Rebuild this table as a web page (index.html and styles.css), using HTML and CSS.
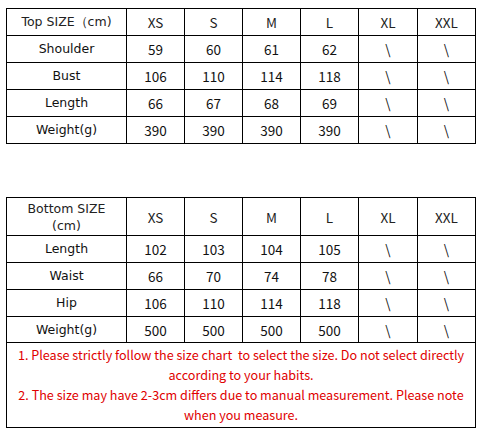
FILE: index.html
```html
<!DOCTYPE html>
<html>
<head>
<meta charset="utf-8">
<link rel="stylesheet" href="styles.css">
</head>
<body>
<div class="chart top">
  <div class="cell label head">Top SIZE（cm)</div>
  <div class="cell head">XS</div><div class="cell head">S</div><div class="cell head">M</div><div class="cell head">L</div><div class="cell head">XL</div><div class="cell head">XXL</div>
  <div class="cell label">Shoulder</div>
  <div class="cell">59</div><div class="cell">60</div><div class="cell">61</div><div class="cell">62</div><div class="cell">\</div><div class="cell">\</div>
  <div class="cell label">Bust</div>
  <div class="cell">106</div><div class="cell">110</div><div class="cell">114</div><div class="cell">118</div><div class="cell">\</div><div class="cell">\</div>
  <div class="cell label">Length</div>
  <div class="cell">66</div><div class="cell">67</div><div class="cell">68</div><div class="cell">69</div><div class="cell">\</div><div class="cell">\</div>
  <div class="cell label">Weight(g)</div>
  <div class="cell">390</div><div class="cell">390</div><div class="cell">390</div><div class="cell">390</div><div class="cell">\</div><div class="cell">\</div>
</div>

<div class="chart bottom">
  <div class="cell label head two">Bottom SIZE<br>(cm)</div>
  <div class="cell head">XS</div><div class="cell head">S</div><div class="cell head">M</div><div class="cell head">L</div><div class="cell head">XL</div><div class="cell head">XXL</div>
  <div class="cell label">Length</div>
  <div class="cell">102</div><div class="cell">103</div><div class="cell">104</div><div class="cell">105</div><div class="cell">\</div><div class="cell">\</div>
  <div class="cell label">Waist</div>
  <div class="cell">66</div><div class="cell">70</div><div class="cell">74</div><div class="cell">78</div><div class="cell">\</div><div class="cell">\</div>
  <div class="cell label">Hip</div>
  <div class="cell">106</div><div class="cell">110</div><div class="cell">114</div><div class="cell">118</div><div class="cell">\</div><div class="cell">\</div>
  <div class="cell label">Weight(g)</div>
  <div class="cell">500</div><div class="cell">500</div><div class="cell">500</div><div class="cell">500</div><div class="cell">\</div><div class="cell">\</div>
  <div class="cell notes">1. Please strictly follow the size chart&nbsp; to select the size. Do not select directly according to your habits.<br>2. The size may have 2-3cm differs due to manual measurement. Please note when you measure.</div>
</div>
</body>
</html>
```

FILE: styles.css
```css
html, body {
  margin: 0;
  padding: 0;
  background: #ffffff;
}
body {
  padding: 8px 0 0 6px;
  font-family: "Noto Sans CJK SC", "Open Sans", sans-serif;
  font-size: 13.5px;
  color: #111;
}
.chart {
  display: grid;
  grid-template-columns: 119px 57px 57px 57px 57px 58px 57px;
  gap: 1px;
  padding: 1px;
  background: #000;
  width: 468px;
}
.top {
  grid-template-rows: repeat(5, 26px);
}
.bottom {
  margin-top: 53px;
  grid-template-rows: 37px 26px 26px 26px 25px 84px;
}
.cell {
  background: #fff;
  display: flex;
  align-items: center;
  justify-content: center;
  text-align: center;
  line-height: 16px;
}
.label {
  font-family: "DejaVu Sans", "Liberation Sans", sans-serif;
  font-size: 12.5px;
}
.head {
  color: #222;
}
.two {
  line-height: 17px;
}
.notes {
  grid-column: 1 / -1;
  color: #e00000;
  font-size: 12.6px;
  line-height: 20px;
  align-items: flex-start;
  padding: 2px 2px 0;
}
```
